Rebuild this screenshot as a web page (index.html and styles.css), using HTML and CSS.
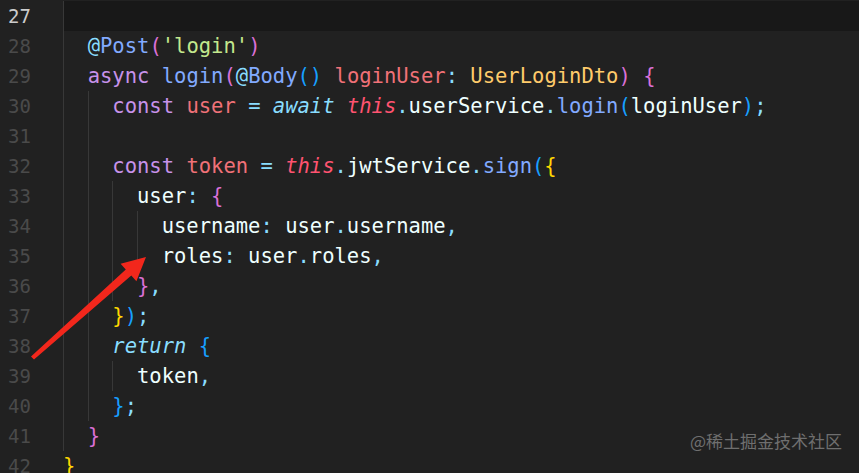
FILE: index.html
```html
<!DOCTYPE html>
<html lang="en">
<head>
    <meta charset="UTF-8">
    <meta name="viewport" content="width=device-width, initial-scale=1.0">
    <title>auth.controller.ts</title>
    <link rel="stylesheet" href="styles.css">
</head>
<body>
    <div class="editor">
        <div class="gutter">
            <div class="num active">27</div>
            <div class="num">28</div>
            <div class="num">29</div>
            <div class="num">30</div>
            <div class="num">31</div>
            <div class="num">32</div>
            <div class="num">33</div>
            <div class="num">34</div>
            <div class="num">35</div>
            <div class="num">36</div>
            <div class="num">37</div>
            <div class="num">38</div>
            <div class="num">39</div>
            <div class="num">40</div>
            <div class="num">41</div>
            <div class="num">42</div>
        </div>
        <div class="code">
            <div class="line current"><span class="g"></span></div>
            <div class="line"><span class="g"></span><span class="op">@</span><span class="fn">Post</span><span class="b2">(</span><span class="str">'login'</span><span class="b2">)</span></div>
            <div class="line"><span class="g"></span><span class="kw">async</span> <span class="fn">login</span><span class="b2">(</span><span class="op">@</span><span class="fn">Body</span><span class="b3">()</span> <span class="var">loginUser</span><span class="op">:</span> <span class="type">UserLoginDto</span><span class="b2">)</span> <span class="b2">{</span></div>
            <div class="line"><span class="g"></span><span class="g"></span><span class="kw">const</span> <span class="var">user</span> <span class="op">=</span> <span class="aw">await</span> <span class="this">this</span><span class="op">.</span><span class="pl">userService</span><span class="op">.</span><span class="fn">login</span><span class="b3">(</span><span class="pl">loginUser</span><span class="b3">)</span><span class="op">;</span></div>
            <div class="line"><span class="g"></span><span class="g"></span></div>
            <div class="line"><span class="g"></span><span class="g"></span><span class="kw">const</span> <span class="var">token</span> <span class="op">=</span> <span class="this">this</span><span class="op">.</span><span class="pl">jwtService</span><span class="op">.</span><span class="fn">sign</span><span class="b3">(</span><span class="b1">{</span></div>
            <div class="line"><span class="g"></span><span class="g"></span><span class="g"></span><span class="pl">user</span><span class="op">:</span> <span class="b2">{</span></div>
            <div class="line"><span class="g"></span><span class="g"></span><span class="g"></span><span class="g"></span><span class="pl">username</span><span class="op">:</span> <span class="pl">user</span><span class="op">.</span><span class="pl">username</span><span class="op">,</span></div>
            <div class="line"><span class="g"></span><span class="g"></span><span class="g"></span><span class="g"></span><span class="pl">roles</span><span class="op">:</span> <span class="pl">user</span><span class="op">.</span><span class="pl">roles</span><span class="op">,</span></div>
            <div class="line"><span class="g"></span><span class="g"></span><span class="g"></span><span class="b2">}</span><span class="op">,</span></div>
            <div class="line"><span class="g"></span><span class="g"></span><span class="b1">}</span><span class="b3">)</span><span class="op">;</span></div>
            <div class="line"><span class="g"></span><span class="g"></span><span class="aw">return</span> <span class="b3">{</span></div>
            <div class="line"><span class="g"></span><span class="g"></span><span class="g"></span><span class="pl">token</span><span class="op">,</span></div>
            <div class="line"><span class="g"></span><span class="g"></span><span class="b3">}</span><span class="op">;</span></div>
            <div class="line"><span class="g"></span><span class="b2">}</span></div>
            <div class="line"><span class="b1">}</span></div>
        </div>
    </div>

    <!-- annotation arrow drawn over the code -->
    <svg class="arrow" width="859" height="473" viewBox="0 0 859 473">
        <polygon points="31,356.5 125.8,269.6 120.6,263.8 146,257 136.4,281.2 131.3,275.4 34,359.5" fill="#f2271c"/>
    </svg>

    <div class="watermark">@稀土掘金技术社区</div>
</body>
</html>
```

FILE: styles.css
```css
body {
    margin: 0;
    padding: 0;
    background-color: #212121;
    overflow: hidden;
    height: 473px;
    position: relative;
}

.editor {
    display: flex;
    padding-top: 1px;
    font-family: "DejaVu Sans Mono", "Liberation Mono", monospace;
    font-size: 20.5px;
    line-height: 30px;
}

.gutter {
    width: 63px;
    flex-shrink: 0;
}

.num {
    height: 30px;
    padding-right: 32px;
    text-align: right;
    color: #4a4a4a;
    font-size: 19px;
}

.num.active {
    color: #cccccc;
}

.code {
    flex: 1;
    color: #eeffff;
}

.line {
    height: 30px;
    white-space: pre;
}

.line.current {
    background-color: #181818;
}

/* indent guides, one per two-space level */
.g {
    display: inline-block;
    width: 2ch;
    height: 30px;
    vertical-align: top;
    border-left: 1px solid #383838;
    box-sizing: border-box;
}

.kw { color: #c792ea; }
.fn { color: #82aaff; }
.var { color: #f07178; }
.op { color: #89ddff; }
.type { color: #ffcb6b; }
.str { color: #c3e88d; }
.pl { color: #eeffff; }
.aw { color: #89ddff; font-style: italic; }
.this { color: #ff5370; font-style: italic; }

.b1 { color: #ffd700; }
.b2 { color: #da70d6; }
.b3 { color: #179fff; }

.arrow {
    position: absolute;
    left: 0;
    top: 0;
    pointer-events: none;
}

.watermark {
    position: absolute;
    right: 17px;
    bottom: 20px;
    font-family: "Noto Sans CJK SC", "Noto Sans", sans-serif;
    font-size: 17px;
    color: #6f6f6f;
}
```
